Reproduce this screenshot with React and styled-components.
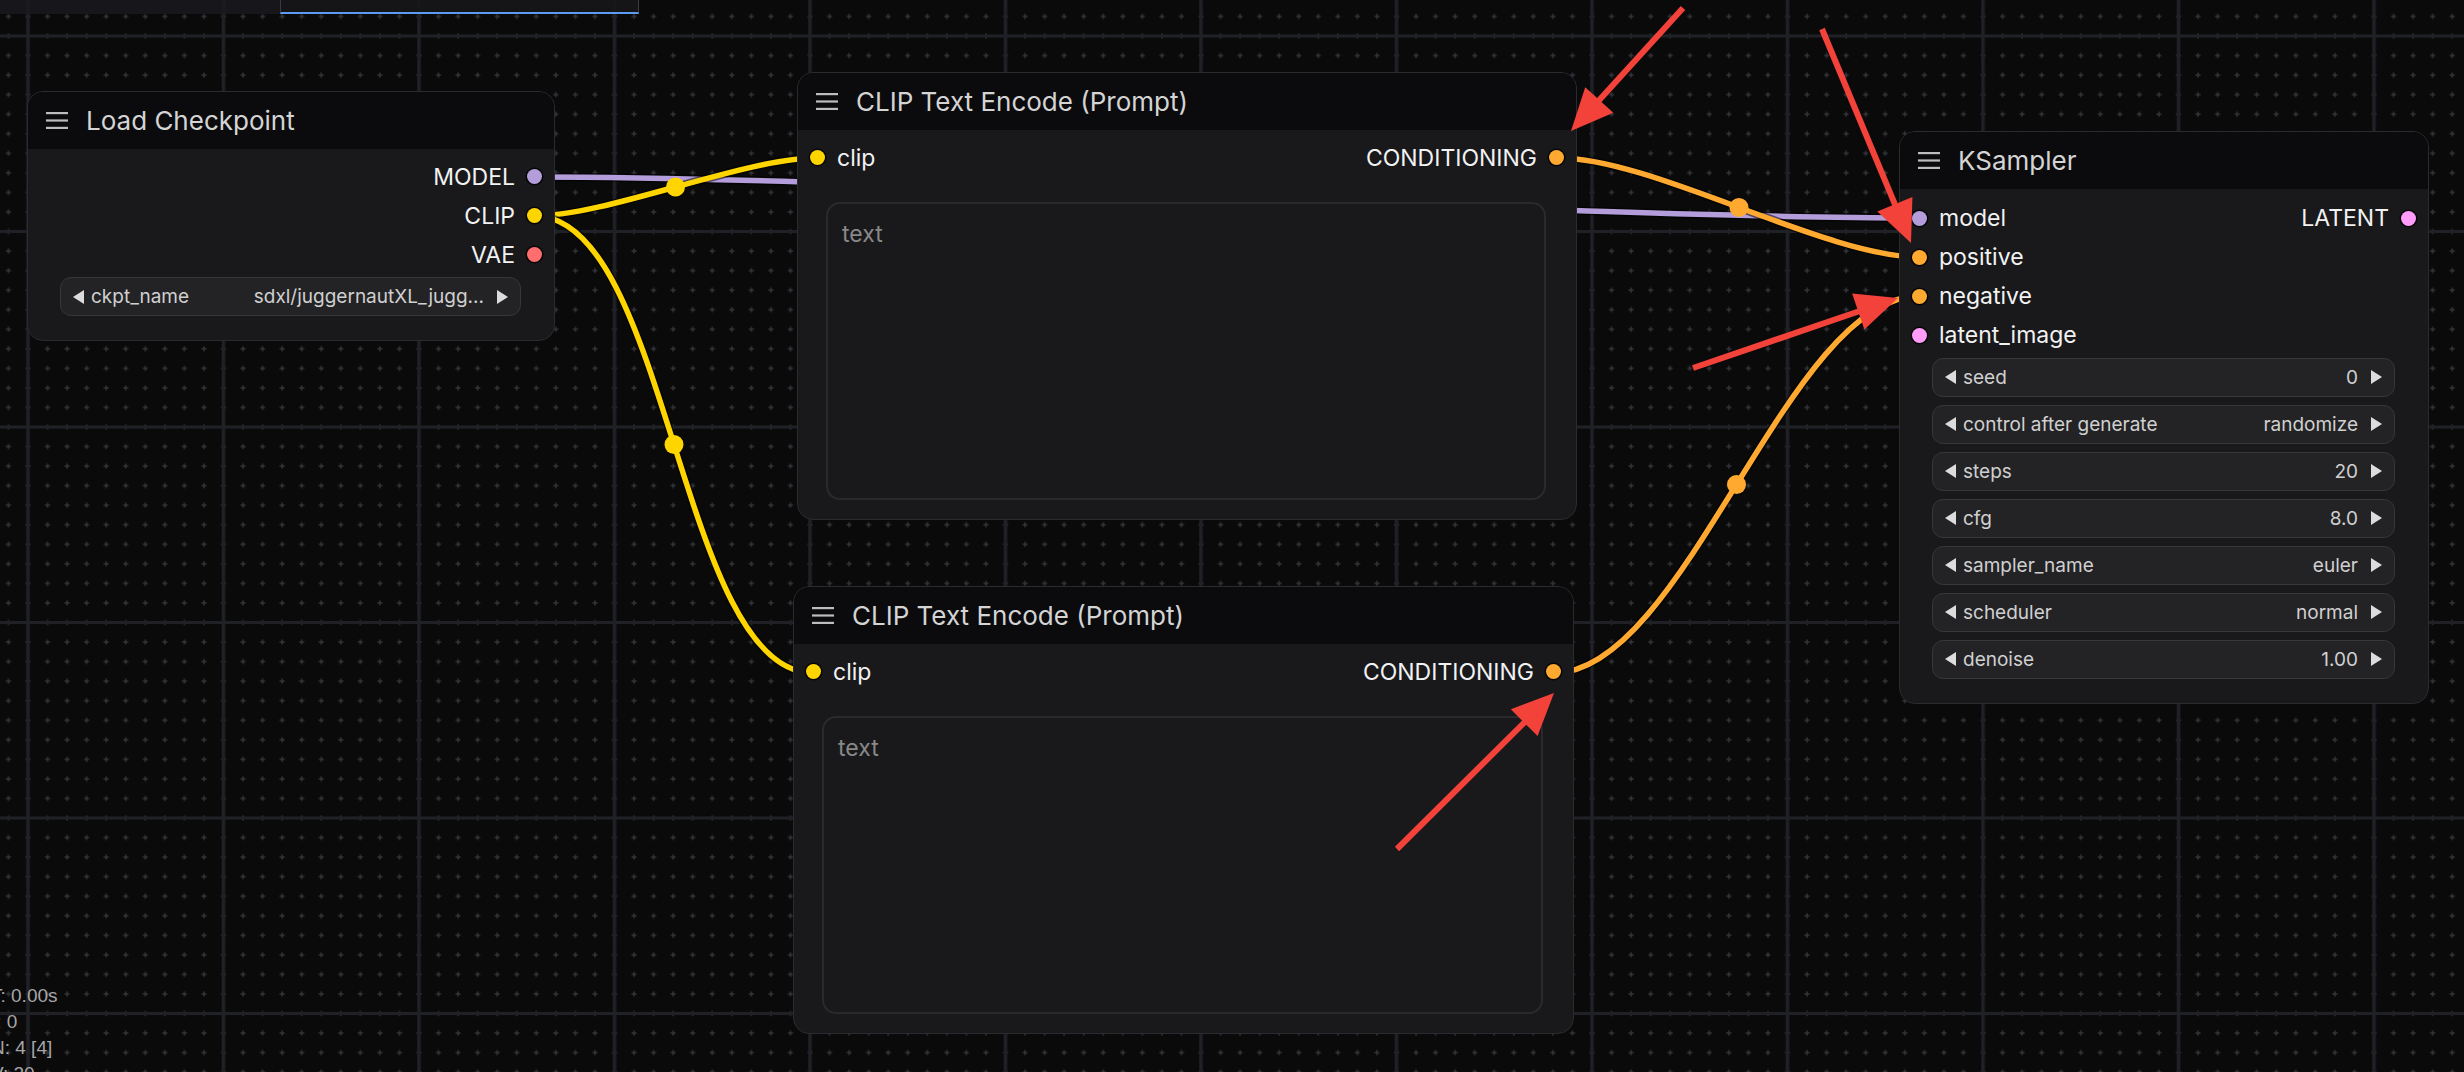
import React from "react";
import styled, { createGlobalStyle } from "styled-components";

const GlobalStyle = createGlobalStyle`
  html, body {
    margin: 0;
    padding: 0;
    background: #0a0a0b;
  }
  body {
    font-family: Inter, "Noto Sans", sans-serif;
    overflow: hidden;
  }
`;

const W = 2464;
const H = 1072;

const Canvas = styled.div`
  position: relative;
  width: ${W}px;
  height: ${H}px;
  overflow: hidden;
  background: #0a0a0b;
`;

const Layer = styled.svg`
  position: absolute;
  left: 0;
  top: 0;
  width: ${W}px;
  height: ${H}px;
  pointer-events: none;
  z-index: ${(p) => p.$z};
`;

const TopStrip = styled.div`
  position: absolute;
  left: 0;
  top: 0;
  height: 14px;
  display: flex;
  z-index: 4;
`;

const StripPart = styled.div`
  width: 280px;
  background: rgba(26, 26, 30, 0.85);
`;

const StripTab = styled.div`
  width: 359px;
  box-sizing: border-box;
  background: rgba(22, 22, 25, 0.9);
  border-left: 1px solid #3a3a3f;
  border-right: 1px solid #3a3a3f;
  border-bottom: 2px solid #5a9cf0;
`;

const Stats = styled.div`
  position: absolute;
  left: -9px;
  top: 983px;
  z-index: 4;
  font-family: "Liberation Sans", Arial, sans-serif;
  font-size: 19px;
  line-height: 26px;
  color: #a6a6a6;
  white-space: pre;
`;

const Node = styled.div`
  position: absolute;
  left: ${(p) => p.$x}px;
  top: ${(p) => p.$y}px;
  width: ${(p) => p.$w}px;
  height: ${(p) => (p.$h ? `${p.$h}px` : "auto")};
  box-sizing: border-box;
  display: flex;
  flex-direction: column;
  background: #19191c;
  border: 1.5px solid #2a2a2f;
  border-radius: 16px;
  overflow: hidden;
  z-index: 2;
`;

const TitleBar = styled.div`
  flex: none;
  height: 57px;
  display: flex;
  align-items: center;
  gap: 18px;
  padding-left: 18px;
  background: #0b0b0d;
  color: #d4d4d4;
  font-size: 26px;
  white-space: nowrap;
`;

const Body = styled.div`
  flex: 1;
  display: flex;
  flex-direction: column;
  padding: ${(p) => p.$pt}px 0 ${(p) => p.$pb}px;
  min-height: 0;
`;

const SlotRow = styled.div`
  height: 39px;
  flex: none;
  display: flex;
  align-items: center;
  padding: 0 12px;
`;

const Slot = styled.div`
  display: flex;
  align-items: center;
  gap: 12px;
  margin-left: ${(p) => (p.$out ? "auto" : "0")};
  font-size: 23px;
  color: #f2f2f2;
  white-space: nowrap;
`;

const Dot = styled.span`
  width: 15px;
  height: 15px;
  border-radius: 50%;
  background: ${(p) => p.$color};
  box-shadow: 0 0 0 1.5px #050505;
  flex: none;
`;

const Widgets = styled.div`
  display: flex;
  flex-direction: column;
  gap: 8px;
  padding: 3px 33px 0 32px;
`;

const Widget = styled.div`
  height: 39px;
  box-sizing: border-box;
  display: flex;
  align-items: center;
  gap: 7px;
  padding: 0 12px;
  background: #232326;
  border: 1.5px solid #36363b;
  border-radius: 11px;
  font-size: 19px;
  color: #d0d0d0;
  white-space: nowrap;
`;

const WidgetLabel = styled.span`
  flex: 1;
`;

const WidgetValue = styled.span`
  margin-right: 6px;
`;

const PromptBox = styled.textarea`
  flex: 1;
  margin: 25px 30px 0 28px;
  resize: none;
  outline: none;
  background: #19191c;
  border: 2px solid #2a2a2e;
  border-radius: 14px;
  padding: 16px 14px;
  font-family: Inter, "Noto Sans", sans-serif;
  font-size: 23px;
  color: #dddddd;
  &::placeholder {
    color: #888888;
  }
`;

const MenuIcon = () => (
  <svg width="22" height="17" viewBox="0 0 22 17">
    <rect x="0" y="0" width="22" height="2.2" fill="#bdbdbd" />
    <rect x="0" y="7.4" width="22" height="2.2" fill="#bdbdbd" />
    <rect x="0" y="14.8" width="22" height="2.2" fill="#bdbdbd" />
  </svg>
);

const Tri = ({ dir }) => (
  <svg width="11" height="14" viewBox="0 0 11 14">
    <polygon
      points={dir === "left" ? "11,0 11,14 0,7" : "0,0 0,14 11,7"}
      fill="#dcdcdc"
    />
  </svg>
);

const Combo = ({ label, value }) => (
  <Widget>
    <Tri dir="left" />
    <WidgetLabel>{label}</WidgetLabel>
    <WidgetValue>{value}</WidgetValue>
    <Tri dir="right" />
  </Widget>
);

const C = {
  MODEL: "#B39DDB",
  CLIP: "#FFD500",
  VAE: "#FF6E6E",
  COND: "#FFA931",
  LATENT: "#FF9CF9",
};

const P = {
  lcModel: [535, 177],
  lcClip: [535, 216],
  c1In: [816, 158],
  c1Out: [1559, 158],
  c2In: [813, 673],
  c2Out: [1554, 673],
  ksModel: [1919, 218],
  ksPos: [1919, 257],
  ksNeg: [1919, 296],
};

const links = [
  { a: P.lcModel, b: P.ksModel, color: C.MODEL },
  { a: P.lcClip, b: P.c1In, color: C.CLIP },
  { a: P.lcClip, b: P.c2In, color: C.CLIP },
  { a: P.c1Out, b: P.ksPos, color: C.COND },
  { a: P.c2Out, b: P.ksNeg, color: C.COND },
];

function spline(a, b) {
  const d = Math.hypot(b[0] - a[0], b[1] - a[1]) * 0.25;
  const c1 = [a[0] + d, a[1]];
  const c2 = [b[0] - d, b[1]];
  const mid = [
    (a[0] + 3 * c1[0] + 3 * c2[0] + b[0]) / 8,
    (a[1] + 3 * c1[1] + 3 * c2[1] + b[1]) / 8,
  ];
  return {
    d: `M${a[0]},${a[1]} C${c1[0]},${c1[1]} ${c2[0]},${c2[1]} ${b[0]},${b[1]}`,
    mid,
  };
}

const arrows = [
  { from: [1683, 8], to: [1571, 131] },
  { from: [1822, 29], to: [1911, 243] },
  { from: [1693, 368], to: [1898, 298] },
  { from: [1397, 849], to: [1554, 693] },
];

function arrowShape(from, to) {
  const dx = to[0] - from[0];
  const dy = to[1] - from[1];
  const len = Math.hypot(dx, dy);
  const ux = dx / len;
  const uy = dy / len;
  const headLen = 42;
  const half = 19;
  const bx = to[0] - ux * headLen;
  const by = to[1] - uy * headLen;
  const head = [
    [to[0], to[1]],
    [bx - uy * half, by + ux * half],
    [bx + uy * half, by - ux * half],
  ]
    .map((p) => p.join(","))
    .join(" ");
  return { line: [from, [bx + ux * 4, by + uy * 4]], head };
}

const GridBackground = () => {
  const minor = 19.55;
  const major = 195.5;
  return (
    <Layer $z={0}>
      <defs>
        <pattern
          id="minor"
          width={minor}
          height={minor}
          patternUnits="userSpaceOnUse"
          x={28 - minor / 2}
          y={36 - minor / 2}
        >
          <rect x={minor / 2 - 2.5} y={minor / 2 - 0.75} width="5" height="1.5" fill="#33343a" />
          <rect x={minor / 2 - 0.75} y={minor / 2 - 2.5} width="1.5" height="5" fill="#33343a" />
        </pattern>
        <pattern
          id="major"
          width={major}
          height={major}
          patternUnits="userSpaceOnUse"
          x={28 - 1.75}
          y={36 - 1.5}
        >
          <rect x="0" y="0" width="3.5" height={major} fill="#202126" />
          <rect x="0" y="0" width={major} height="3" fill="#202126" />
        </pattern>
      </defs>
      <rect width={W} height={H} fill="url(#minor)" />
      <rect width={W} height={H} fill="url(#major)" />
    </Layer>
  );
};

const Wires = () => (
  <Layer $z={1}>
    {links.map((l, i) => {
      const s = spline(l.a, l.b);
      return (
        <g key={i}>
          <path d={s.d} fill="none" stroke="rgba(0,0,0,0.55)" strokeWidth="8.5" />
          <path d={s.d} fill="none" stroke={l.color} strokeWidth="5.5" />
          <circle cx={s.mid[0]} cy={s.mid[1]} r="9.5" fill={l.color} />
        </g>
      );
    })}
  </Layer>
);

const Annotations = () => (
  <Layer $z={3}>
    {arrows.map((a, i) => {
      const s = arrowShape(a.from, a.to);
      return (
        <g key={i}>
          <line
            x1={s.line[0][0]}
            y1={s.line[0][1]}
            x2={s.line[1][0]}
            y2={s.line[1][1]}
            stroke="#f3423a"
            strokeWidth="6"
          />
          <polygon points={s.head} fill="#f3423a" />
        </g>
      );
    })}
  </Layer>
);

const kSamplerWidgets = [
  ["seed", "0"],
  ["control after generate", "randomize"],
  ["steps", "20"],
  ["cfg", "8.0"],
  ["sampler_name", "euler"],
  ["scheduler", "normal"],
  ["denoise", "1.00"],
];

const ClipNode = ({ x, y, w }) => (
  <Node $x={x} $y={y} $w={w} $h={448}>
    <TitleBar>
      <MenuIcon />
      CLIP Text Encode (Prompt)
    </TitleBar>
    <Body $pt={8} $pb={19}>
      <SlotRow>
        <Slot>
          <Dot $color={C.CLIP} />
          clip
        </Slot>
        <Slot $out>
          CONDITIONING
          <Dot $color={C.COND} />
        </Slot>
      </SlotRow>
      <PromptBox placeholder="text" readOnly />
    </Body>
  </Node>
);

export default function App() {
  return (
    <Canvas>
      <GlobalStyle />
      <GridBackground />
      <Wires />

      <Node $x={27} $y={91} $w={528}>
        <TitleBar>
          <MenuIcon />
          Load Checkpoint
        </TitleBar>
        <Body $pt={8} $pb={24}>
          <SlotRow>
            <Slot $out>
              MODEL
              <Dot $color={C.MODEL} />
            </Slot>
          </SlotRow>
          <SlotRow>
            <Slot $out>
              CLIP
              <Dot $color={C.CLIP} />
            </Slot>
          </SlotRow>
          <SlotRow>
            <Slot $out>
              VAE
              <Dot $color={C.VAE} />
            </Slot>
          </SlotRow>
          <Widgets>
            <Combo label="ckpt_name" value="sdxl/juggernautXL_jugg..." />
          </Widgets>
        </Body>
      </Node>

      <ClipNode x={797} y={72} w={780} />
      <ClipNode x={793} y={586} w={781} />

      <Node $x={1899} $y={131} $w={530}>
        <TitleBar>
          <MenuIcon />
          KSampler
        </TitleBar>
        <Body $pt={9.5} $pb={24}>
          <SlotRow>
            <Slot>
              <Dot $color={C.MODEL} />
              model
            </Slot>
            <Slot $out>
              LATENT
              <Dot $color={C.LATENT} />
            </Slot>
          </SlotRow>
          <SlotRow>
            <Slot>
              <Dot $color={C.COND} />
              positive
            </Slot>
          </SlotRow>
          <SlotRow>
            <Slot>
              <Dot $color={C.COND} />
              negative
            </Slot>
          </SlotRow>
          <SlotRow>
            <Slot>
              <Dot $color={C.LATENT} />
              latent_image
            </Slot>
          </SlotRow>
          <Widgets>
            {kSamplerWidgets.map(([label, value]) => (
              <Combo key={label} label={label} value={value} />
            ))}
          </Widgets>
        </Body>
      </Node>

      <Annotations />

      <TopStrip>
        <StripPart />
        <StripTab />
      </TopStrip>

      <Stats>{"T: 0.00s\nI: 0\nN: 4 [4]\nV: 20"}</Stats>
    </Canvas>
  );
}
